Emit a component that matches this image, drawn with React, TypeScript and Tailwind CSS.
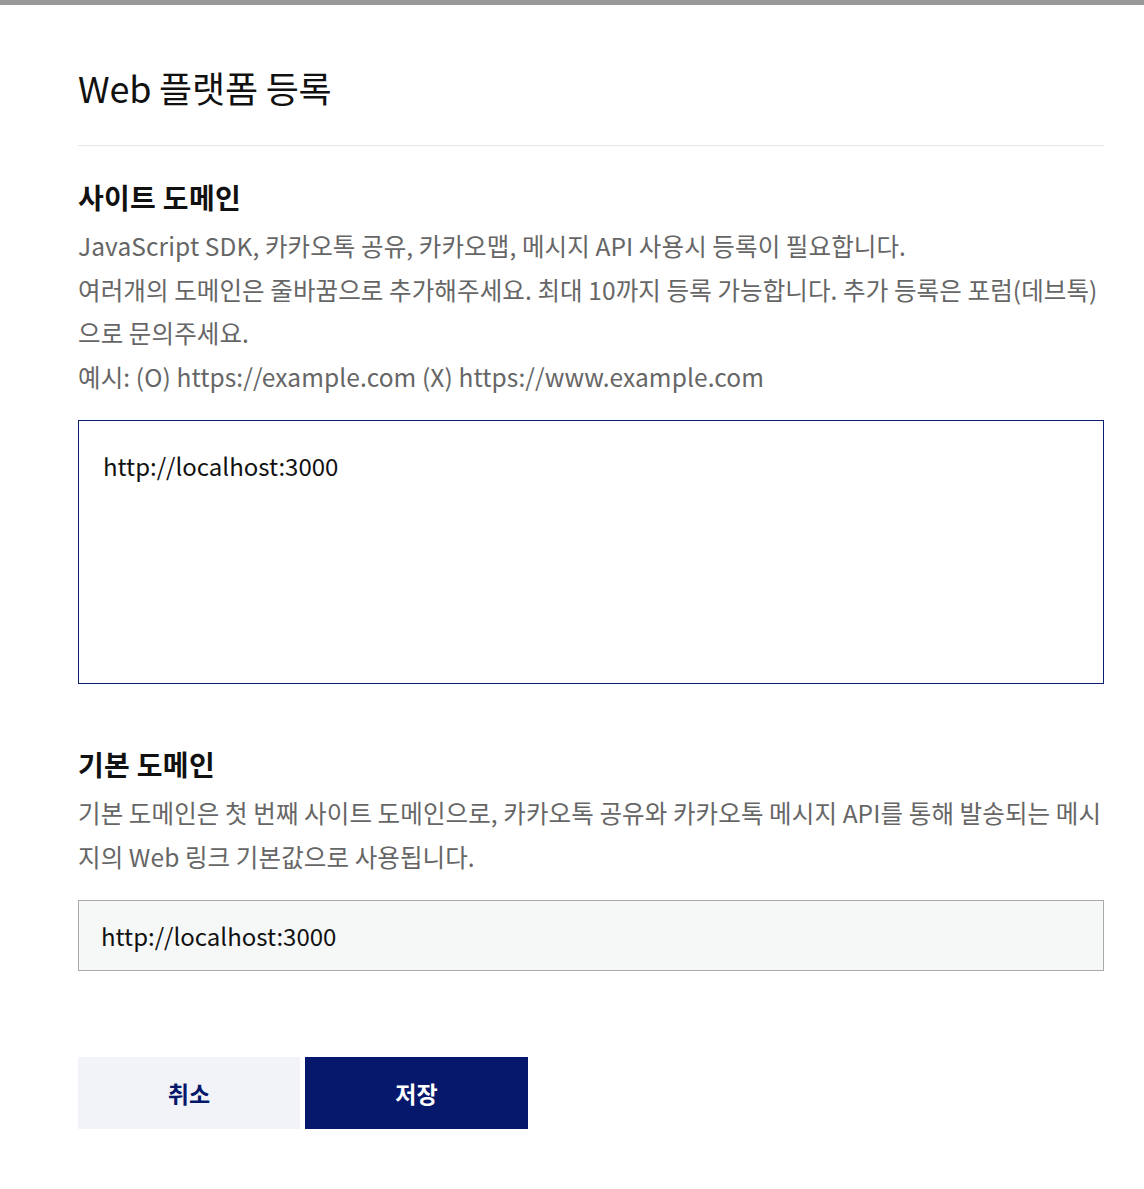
import React from 'react';

const font = { fontFamily: '"Noto Sans CJK KR", "Noto Sans", sans-serif' };

const App = () => {
  return (
    <div className="min-h-screen bg-white" style={font}>
      <div className="h-[5px] bg-[#999999]" />
      <div className="px-[78px] pr-[40px]">
        <h1 className="pt-[57px] pb-[33px] text-[36px] leading-[50px] text-[#111] font-normal tracking-[-0.2px] border-b border-[#e6e6e6]">
          Web 플랫폼 등록
        </h1>

        <section className="pt-[33px]">
          <h2 className="text-[28px] leading-[36px] font-bold text-[#111] tracking-[0.3px]">사이트 도메인</h2>
          <div className="mt-[9px] text-[24.5px] leading-[43.5px] text-[#666] tracking-[0.1px]">
            <p>JavaScript SDK, 카카오톡 공유, 카카오맵, 메시지 API 사용시 등록이 필요합니다.</p>
            <p>
              여러개의 도메인은 줄바꿈으로 추가해주세요. 최대 10까지 등록 가능합니다. 추가 등록은 포럼(데브톡)으로
              문의주세요.
            </p>
            <p>예시: (O) https://example.com (X) https://www.example.com</p>
          </div>
          <textarea
            className="mt-[22px] block w-full h-[264px] border border-[#0a1f73] px-[24px] py-[28px] text-[24px] leading-[34px] text-[#111] resize-none outline-none"
            defaultValue="http://localhost:3000"
            style={font}
          />
        </section>

        <section className="pt-[62px]">
          <h2 className="text-[28px] leading-[36px] font-bold text-[#111] tracking-[0.3px]">기본 도메인</h2>
          <p className="mt-[9px] text-[24.5px] leading-[43.5px] text-[#666] tracking-[0.1px]">
            기본 도메인은 첫 번째 사이트 도메인으로, 카카오톡 공유와 카카오톡 메시지 API를 통해 발송되는 메시지의 Web
            링크 기본값으로 사용됩니다.
          </p>
          <div className="mt-[22px] h-[71px] border border-[#aaaaaa] bg-[#f6f7f7] px-[22px] flex items-center text-[24px] text-[#111]">
            http://localhost:3000
          </div>
        </section>

        <div className="mt-[86px] flex gap-[5px]">
          <button className="w-[222px] h-[72px] bg-[#f1f3f8] text-[#05186b] text-[23px] font-bold">취소</button>
          <button className="w-[223px] h-[72px] bg-[#05186b] text-white text-[23px] font-bold">저장</button>
        </div>
      </div>
    </div>
  );
};

export default App;
